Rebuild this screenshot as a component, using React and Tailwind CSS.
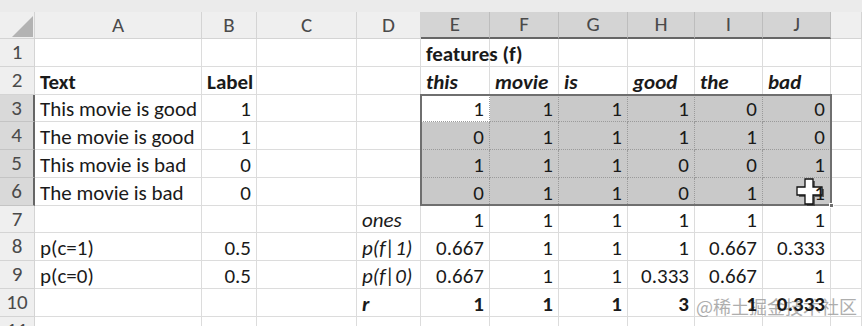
import React from "react";

const cols = ["A", "B", "C", "D", "E", "F", "G", "H", "I", "J", ""];

// each row: A, B, D and the E..J values
const rows = [
  { A: "", B: "", D: "", vals: [{ t: "features (f)", b: true, left: true }, "", "", "", "", ""] },
  {
    A: { t: "Text", b: true },
    B: { t: "Label", b: true, left: true },
    D: "",
    vals: ["this", "movie", "is", "good", "the", "bad"].map((w) => ({ t: w, b: true, i: true, left: true })),
  },
  { A: "This movie is good", B: 1, D: "", vals: [1, 1, 1, 1, 0, 0] },
  { A: "The movie is good", B: 1, D: "", vals: [0, 1, 1, 1, 1, 0] },
  { A: "This movie is bad", B: 0, D: "", vals: [1, 1, 1, 0, 0, 1] },
  { A: "The movie is bad", B: 0, D: "", vals: [0, 1, 1, 0, 1, 1] },
  { A: "", B: "", D: { t: "ones", i: true }, vals: [1, 1, 1, 1, 1, 1] },
  { A: "p(c=1)", B: 0.5, D: { t: "p(f|1)", i: true }, vals: ["0.667", 1, 1, 1, "0.667", "0.333"] },
  { A: "p(c=0)", B: 0.5, D: { t: "p(f|0)", i: true }, vals: ["0.667", 1, 1, "0.333", "0.667", 1] },
  {
    A: "",
    B: "",
    D: { t: "r", i: true, b: true },
    vals: [1, 1, 1, 3, 1, "0.333"].map((v) => ({ t: v, b: true })),
  },
];

function norm(c) {
  if (c === "" || c === undefined) return { t: "" };
  if (typeof c === "object") return c;
  return { t: c };
}

function Cell({ c, selected, active, inner }) {
  const d = norm(c);
  const num = typeof d.t === "number" || /^[0-9.]+$/.test(String(d.t));
  const alignRight = num && !d.left;
  let cls = "flex items-center pt-[2px] px-[5px] leading-[22px] whitespace-nowrap overflow-visible min-w-0 relative ";
  cls += alignRight ? "justify-end " : "justify-start ";
  if (selected && !active) cls += "bg-[#c9c9c9] ";
  else cls += "bg-white ";
  if (inner) cls += "border-r border-b border-dotted border-[#9a9a9a] ";
  else cls += "border-r border-b border-[#dcdcdc] ";
  if (d.b) cls += "font-bold ";
  if (d.i) cls += "italic ";
  return (
    <div className={cls}>
      <span className="relative z-10">{d.t}</span>
    </div>
  );
}

export default function App() {
  return (
    <div
      className="relative w-[862px] h-[326px] overflow-hidden bg-white text-[21px] text-[#1a1a1a]"
      style={{ fontFamily: "Carlito, Lato, 'Liberation Sans', sans-serif" }}
    >
      <div className="h-[12px] bg-[#ebebeb]" />
      <div className="grid grid-cols-[35px_167px_55px_100px_64px_69px_69px_69px_67px_68px_68px_31px] grid-rows-[27px_28px_28px_27px_28px_28px_28px_27px_28px_28px_28px_20px]">
        {/* header row */}
        <div className="bg-[#efefef] border-r border-b border-[#d4d4d4] relative">
          <svg className="absolute left-[12px] top-[4px]" width="21" height="21" viewBox="0 0 21 21">
            <polygon points="21,0 21,21 0,21" fill="#b3b3b3" />
          </svg>
        </div>
        {cols.map((c, i) => {
          const sel = i >= 4 && i <= 9;
          return (
            <div
              key={c + i}
              className={
                "flex items-center justify-center text-[21px] leading-none font-light text-[#4a4a4a] border-r " +
                (sel
                  ? "bg-[#d4d4d4] border-[#bdbdbd] border-b-2 border-b-[#666666]"
                  : "bg-[#efefef] border-[#d4d4d4] border-b")
              }
            >
              {c}
            </div>
          );
        })}

        {rows.map((r, ri) => {
          const rowSel = ri >= 2 && ri <= 5;
          return (
            <React.Fragment key={ri}>
              <div
                className={
                  "flex items-center justify-center text-[21px] leading-none font-light text-[#4a4a4a] border-b " +
                  (rowSel
                    ? "bg-[#d9d9d9] border-[#c4c4c4] border-r-2 border-r-[#666666]"
                    : "bg-[#efefef] border-[#d4d4d4] border-r")
                }
              >
                {ri + 1}
              </div>
              <Cell c={r.A} />
              <Cell c={r.B} />
              <Cell c="" />
              <Cell c={r.D} />
              {r.vals.map((v, vi) => (
                <Cell
                  key={vi}
                  c={v}
                  selected={rowSel}
                  active={ri === 2 && vi === 0}
                  inner={rowSel}
                />
              ))}
              <Cell c="" />
            </React.Fragment>
          );
        })}

        <div className="flex items-start justify-center pt-[3px] text-[21px] leading-none font-light text-[#4a4a4a] bg-[#efefef] border-r border-[#d4d4d4]">
          11
        </div>
        {cols.map((c, i) => (
          <div key={"r11" + i} className="border-r border-[#dcdcdc] bg-white" />
        ))}
      </div>

      {/* selection border E3:J6 */}
      <div className="absolute left-[420px] top-[94px] w-[412px] h-[112px] border-2 border-[#6f6f6f] pointer-events-none" />
      <div className="absolute left-[829px] top-[203px] w-[5px] h-[5px] bg-[#6f6f6f] border border-white" />

      {/* cursor */}
      <svg className="absolute left-[794px] top-[177px]" width="32" height="30" viewBox="0 0 32 30">
        <path d="M11 2h8v8h9v8h-9v9h-8v-9H3v-8h8z" transform="translate(2 2)" fill="#333" opacity="0.7" />
        <path d="M11 2h8v8h9v8h-9v9h-8v-9H3v-8h8z" fill="#fff" stroke="#111" strokeWidth="1.3" />
      </svg>

      {/* watermark */}
      <div
        className="absolute left-[696px] top-[293px] text-[18px] text-[#9a9a9a] opacity-80 whitespace-nowrap"
        style={{ fontFamily: "'Noto Sans CJK SC', sans-serif" }}
      >
        @稀土掘金技术社区
      </div>
    </div>
  );
}
